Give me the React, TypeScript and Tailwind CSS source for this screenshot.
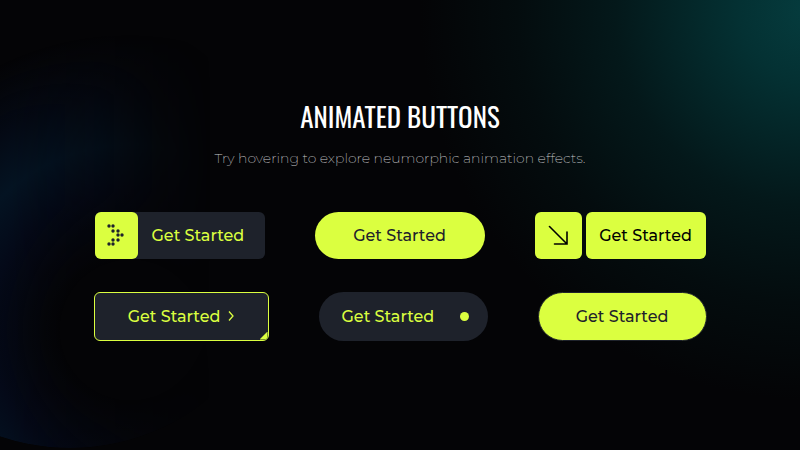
import React from "react";

const base =
  "flex cursor-pointer items-center font-['Montserrat','Inter',sans-serif] text-base leading-[25px] font-medium whitespace-nowrap";

function DotArrow() {
  const dots = [
    [2, 2], [6, 2], [6, 7], [11, 7], [11, 11], [15, 11], [6, 16], [11, 16], [2, 20], [6, 20],
  ];
  return (
    <svg width="18" height="22" viewBox="0 0 18 22" fill="#1e222b" aria-hidden="true">
      {dots.map(([x, y]) => (
        <circle key={`${x}-${y}`} cx={x} cy={y} r="1.7" />
      ))}
    </svg>
  );
}

export default function App() {
  return (
    <main className="relative flex min-h-screen flex-col items-center justify-center overflow-hidden bg-[#040406] pb-2.5">
      <div className="absolute -top-[380px] -right-[400px] size-[780px] bg-[radial-gradient(closest-side,#053c3e_0%,#043133_18%,#04181a_50%,#040c0e_75%,#04040600_100%)]" />
      <div className="absolute bottom-0.5 -left-[150px] size-[440px] rounded-full bg-[radial-gradient(circle_at_280px_322px,#04091a00_70px,#040918_140px,#041322_185px,#040914_235px,#04040600_295px)] [mask-image:linear-gradient(to_right,#000_160px,#00000099_250px,#00000033_310px,transparent_360px)]" />

      <div className="relative flex flex-col items-center">
        <h1 className="font-['Oswald','Liberation_Sans_Narrow',sans-serif] text-[27px] leading-8 text-white">
          ANIMATED BUTTONS
        </h1>
        <p className="mt-3.5 font-['Montserrat','Inter',sans-serif] text-sm leading-6 font-extralight text-[#c8c8ca]">
          Try hovering to explore neumorphic animation effects.
        </p>

        <div className="mt-[42px] flex flex-col gap-[33px]">
          <div className="flex items-center justify-center gap-[50px]">
            <button type="button" className={`${base} h-[47px] w-[170px] rounded-md bg-[#1e222b] text-[#dbff40]`}>
              <span className="flex h-full w-[43px] items-center justify-center rounded-md bg-[#dbff40]">
                <DotArrow />
              </span>
              <span className="pl-3.5">Get Started</span>
            </button>
            <button type="button" className={`${base} h-[47px] w-[170px] justify-center rounded-full bg-[#dbff40] text-[#1e222b]`}>
              Get Started
            </button>
            <button type="button" className={`${base} h-[47px] gap-1 text-black`}>
              <span className="flex h-full w-[47px] items-center justify-center rounded-md bg-[#dbff40]">
                <svg width="20" height="20" viewBox="0 0 20 20" fill="none" stroke="#000" strokeWidth="1.6" strokeLinecap="round" aria-hidden="true">
                  <path d="M1.5 1.5L19 19M19 7V19H6.5" />
                </svg>
              </span>
              <span className="flex h-full w-[120px] items-center justify-center rounded-md bg-[#dbff40]">Get Started</span>
            </button>
          </div>

          <div className="flex items-center justify-center gap-[50px]">
            <button type="button" className={`${base} relative h-[49px] w-[175px] justify-center gap-2 overflow-hidden rounded-md border border-[#dbff40] bg-[#1e222b] text-[#dbff40]`}>
              Get Started
              <svg width="6" height="10" viewBox="0 0 6 10" fill="none" stroke="currentColor" strokeWidth="1.3" aria-hidden="true">
                <path d="M1 0.5L5 5L1 9.5" />
              </svg>
              <span className="absolute right-0 bottom-0 size-2 bg-[#dbff40] [clip-path:polygon(100%_0,100%_100%,0_100%)]" />
            </button>
            <button type="button" className={`${base} h-[49px] w-[169px] justify-between rounded-full bg-[#1e222b] pr-[19px] pl-[23px] text-[#dbff40]`}>
              Get Started
              <span className="size-[9px] rounded-full bg-[#dbff40]" />
            </button>
            <button type="button" className={`${base} h-[49px] w-[169px] justify-center rounded-full border border-[#1e222b] bg-[#dbff40] text-[#1e222b]`}>
              Get Started
            </button>
          </div>
        </div>
      </div>
    </main>
  );
}
